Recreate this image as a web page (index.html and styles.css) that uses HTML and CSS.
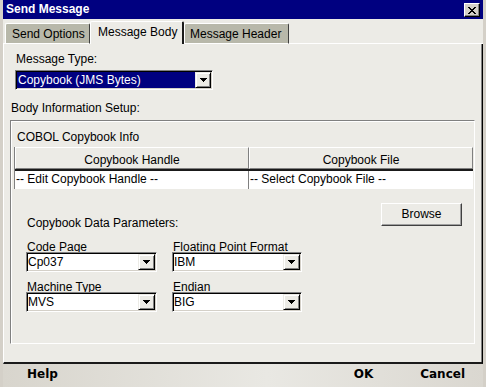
FILE: index.html
```html
<!DOCTYPE html>
<html>
<head>
<meta charset="utf-8">
<title>Send Message</title>
<link rel="stylesheet" href="styles.css">
</head>
<body>
<div class="window">
  <div class="titlebar">
    <span class="title">Send Message</span>
    <span class="close"><svg width="8" height="7" viewBox="0 0 8 7" shape-rendering="crispEdges"><path fill="#000" d="M0 0h2v1H0zM6 0h2v1H6zM1 1h2v1H1zM5 1h2v1H5zM2 2h4v1H2zM3 3h2v1H3zM2 4h4v1H2zM1 5h2v1H1zM5 5h2v1H5zM0 6h2v1H0zM6 6h2v1H6z"/></svg></span>
  </div>
  <div class="tabs">
    <div class="tab-fill lead"></div>
    <div class="tab t1">Send Options</div>
    <div class="tab t2 active">Message Body</div>
    <div class="tab t3">Message Header</div>
    <div class="tab-fill rest"></div>
  </div>
  <div class="panel">
    <div class="lbl msg-type">Message Type:</div>
    <div class="combo wide focused">
      <span class="val">Copybook (JMS Bytes)</span>
      <span class="arrow"><svg width="7" height="4" viewBox="0 0 7 4" shape-rendering="crispEdges"><path fill="#000" d="M0 0h7v1H0zM1 1h5v1H1zM2 2h3v1H2zM3 3h1v1H3z"/></svg></span>
    </div>
    <div class="lbl body-setup">Body Information Setup:</div>
    <div class="group">
      <div class="group-title">COBOL Copybook Info</div>
      <div class="table">
        <div class="thead">
          <div class="th c1">Copybook Handle</div>
          <div class="th c2">Copybook File</div>
        </div>
        <div class="trow">
          <div class="td c1">-- Edit Copybook Handle --</div>
          <div class="td c2">-- Select Copybook File --</div>
        </div>
      </div>
      <div class="params-row">
        <div class="lbl params">Copybook Data Parameters:</div>
        <span class="btn">Browse</span>
      </div>
      <div class="fields">
        <div class="field">
          <div class="flbl">Code Page</div>
          <div class="combo">
            <span class="val">Cp037</span>
            <span class="arrow"><svg width="7" height="4" viewBox="0 0 7 4" shape-rendering="crispEdges"><path fill="#000" d="M0 0h7v1H0zM1 1h5v1H1zM2 2h3v1H2zM3 3h1v1H3z"/></svg></span>
          </div>
        </div>
        <div class="field">
          <div class="flbl">Floating Point Format</div>
          <div class="combo">
            <span class="val">IBM</span>
            <span class="arrow"><svg width="7" height="4" viewBox="0 0 7 4" shape-rendering="crispEdges"><path fill="#000" d="M0 0h7v1H0zM1 1h5v1H1zM2 2h3v1H2zM3 3h1v1H3z"/></svg></span>
          </div>
        </div>
        <div class="field">
          <div class="flbl">Machine Type</div>
          <div class="combo">
            <span class="val">MVS</span>
            <span class="arrow"><svg width="7" height="4" viewBox="0 0 7 4" shape-rendering="crispEdges"><path fill="#000" d="M0 0h7v1H0zM1 1h5v1H1zM2 2h3v1H2zM3 3h1v1H3z"/></svg></span>
          </div>
        </div>
        <div class="field">
          <div class="flbl">Endian</div>
          <div class="combo">
            <span class="val">BIG</span>
            <span class="arrow"><svg width="7" height="4" viewBox="0 0 7 4" shape-rendering="crispEdges"><path fill="#000" d="M0 0h7v1H0zM1 1h5v1H1zM2 2h3v1H2zM3 3h1v1H3z"/></svg></span>
          </div>
        </div>
      </div>
    </div>
  </div>
  <div class="footer">
    <span class="help">Help</span>
    <span class="ok">OK</span>
    <span class="cancel">Cancel</span>
  </div>
</div>
</body>
</html>
```
FILE: styles.css
```css
* { box-sizing: border-box; margin: 0; padding: 0; }
html, body { width: 486px; height: 387px; overflow: hidden; }
body {
  background: #d4d0c8;
  font: 12px "Liberation Sans", Arial, sans-serif;
  color: #000;
}
.window {
  width: 486px;
  height: 387px;
  display: flex;
  flex-direction: column;
  background: #ecebe6;
  border-left: 3px solid #d4d0c8;
  border-right: 3px solid #d4d0c8;
}
.titlebar {
  height: 19px;
  flex: none;
  display: flex;
  align-items: flex-start;
  background: #000080;
  color: #fff;
  font-weight: bold;
  line-height: 19px;
  padding-left: 3px;
}
.close {
  margin-left: auto;
  margin-top: 3px;
  margin-right: 3px;
  width: 16px;
  height: 14px;
  background: #d4d0c8;
  border-top: 1px solid #fff;
  border-left: 1px solid #fff;
  border-right: 1px solid #000;
  border-bottom: 1px solid #000;
  box-shadow: inset -1px -1px 0 #808080;
  display: flex;
  align-items: center;
  justify-content: center;
}
.close svg { display: block; }

.tabs {
  flex: none;
  margin-top: 2px;
  height: 23px;
  display: flex;
  align-items: flex-end;
}
.tab-fill { height: 1px; border-bottom: 1px solid #fff; }
.tab-fill.lead { width: 2px; }
.tab-fill.rest { flex: 1; }
.tab {
  height: 21px;
  background: #b8b8aa;
  border-top: 1px solid #fff;
  border-left: 1px solid #fff;
  border-right: 1px solid #404040;
  border-bottom: 1px solid #fff;
  padding-top: 3px;
  line-height: 14px;
  white-space: nowrap;
  border-top-left-radius: 2px;
  border-top-right-radius: 2px;
}
.t1 { width: 85px; padding-left: 6px; }
.t2 { width: 94px; padding-left: 7px; }
.t3 { width: 105px; padding-left: 5px; }
.tab.active {
  height: 23px;
  background: #ecebe6;
  border-bottom: none;
  border-right: 2px solid #1a1a1a;
}

.panel {
  flex: none;
  height: 320px;
  border-left: 1px solid #fff;
  border-right: 1px solid #000;
  border-bottom: 2px solid #1a1a1a;
  box-shadow: inset -1px 0 0 #808080;
  display: flex;
  flex-direction: column;
  align-items: flex-start;
}
.lbl { line-height: 14px; white-space: nowrap; }
.msg-type { margin-top: 8px; margin-left: 12px; }
.body-setup { margin-top: 11px; margin-left: 7px; }

.combo {
  height: 20px;
  display: flex;
  background: #fff;
  border-top: 1px solid #808080;
  border-left: 1px solid #808080;
  border-right: 1px solid #fff;
  border-bottom: 1px solid #fff;
  box-shadow: inset 1px 1px 0 #000, inset -1px -1px 0 #d4d0c8;
  padding: 1px;
}
.combo .val {
  flex: 1;
  line-height: 16px;
  white-space: nowrap;
  overflow: hidden;
}
.combo .arrow {
  width: 17px;
  height: 16px;
  flex: none;
  background: #ecebe6;
  border-top: 1px solid #ecebe6;
  border-left: 1px solid #ecebe6;
  border-right: 1px solid #000;
  border-bottom: 1px solid #000;
  box-shadow: inset 1px 1px 0 #fff, inset -1px -1px 0 #808080;
  display: flex;
  align-items: center;
  justify-content: center;
}
.combo .arrow svg { display: block; }
.combo.wide { width: 198px; margin-left: 11px; margin-top: 4px; }
.combo.wide .arrow { width: 16px; }
.combo.focused .val {
  background: #000080;
  color: #fff;
  padding-left: 1px;
}

.group {
  margin-top: 5px;
  margin-left: 6px;
  width: 465px;
  height: 224px;
  border-top: 1px solid #808080;
  border-left: 1px solid #808080;
  border-right: 1px solid #fff;
  border-bottom: 1px solid #fff;
  box-shadow: inset 1px 1px 0 #fff;
  display: flex;
  flex-direction: column;
}
.group-title {
  margin-top: 9px;
  padding-left: 6px;
  line-height: 14px;
}
.table {
  margin-top: 3px;
  margin-left: 3px;
  width: 459px;
  border-left: 1px solid #808080;
}
.thead {
  display: flex;
  border-bottom: 2px solid #1a1a1a;
}
.th {
  height: 22px;
  background: #ecebe6;
  border-top: 1px solid #fff;
  border-left: 1px solid #fff;
  border-right: 1px solid #808080;
  border-bottom: 1px solid #808080;
  padding-top: 5px;
  line-height: 14px;
  text-align: center;
  white-space: nowrap;
}
.c1 { width: 234px; flex: none; }
.c2 { flex: 1; }
.trow {
  display: flex;
  background: #fff;
  height: 18px;
}
.td {
  line-height: 17px;
  padding-left: 1px;
  white-space: nowrap;
}
.td.c1 { border-right: 1px solid #808080; }

.params-row {
  margin-top: 14px;
  display: flex;
  justify-content: space-between;
  align-items: flex-start;
  padding-left: 16px;
  padding-right: 12px;
}
.params { margin-top: 13px; }
.btn {
  width: 81px;
  height: 23px;
  background: #ecebe6;
  border-top: 1px solid #fff;
  border-left: 1px solid #fff;
  border-right: 1px solid #404040;
  border-bottom: 1px solid #404040;
  box-shadow: inset -1px -1px 0 #a0a0a0;
  line-height: 21px;
  text-align: center;
}

.fields {
  margin-top: 12px;
  margin-left: 15px;
  display: grid;
  grid-template-columns: 131px 130px;
  column-gap: 15px;
  row-gap: 10px;
}
.field { display: flex; flex-direction: column; }
.flbl {
  height: 10px;
  line-height: 10px;
  padding-left: 1px;
  white-space: nowrap;
}

.footer {
  flex: none;
  height: 23px;
  display: flex;
  background: linear-gradient(90deg, #d8d5cd 0%, #e9e8e3 55%, #dad7d0 100%);
  font: bold 12px "DejaVu Sans", sans-serif;
  line-height: 21px;
  padding-left: 24px;
  padding-right: 18px;
}
.ok { margin-left: auto; }
.cancel { margin-left: 47px; }
```
